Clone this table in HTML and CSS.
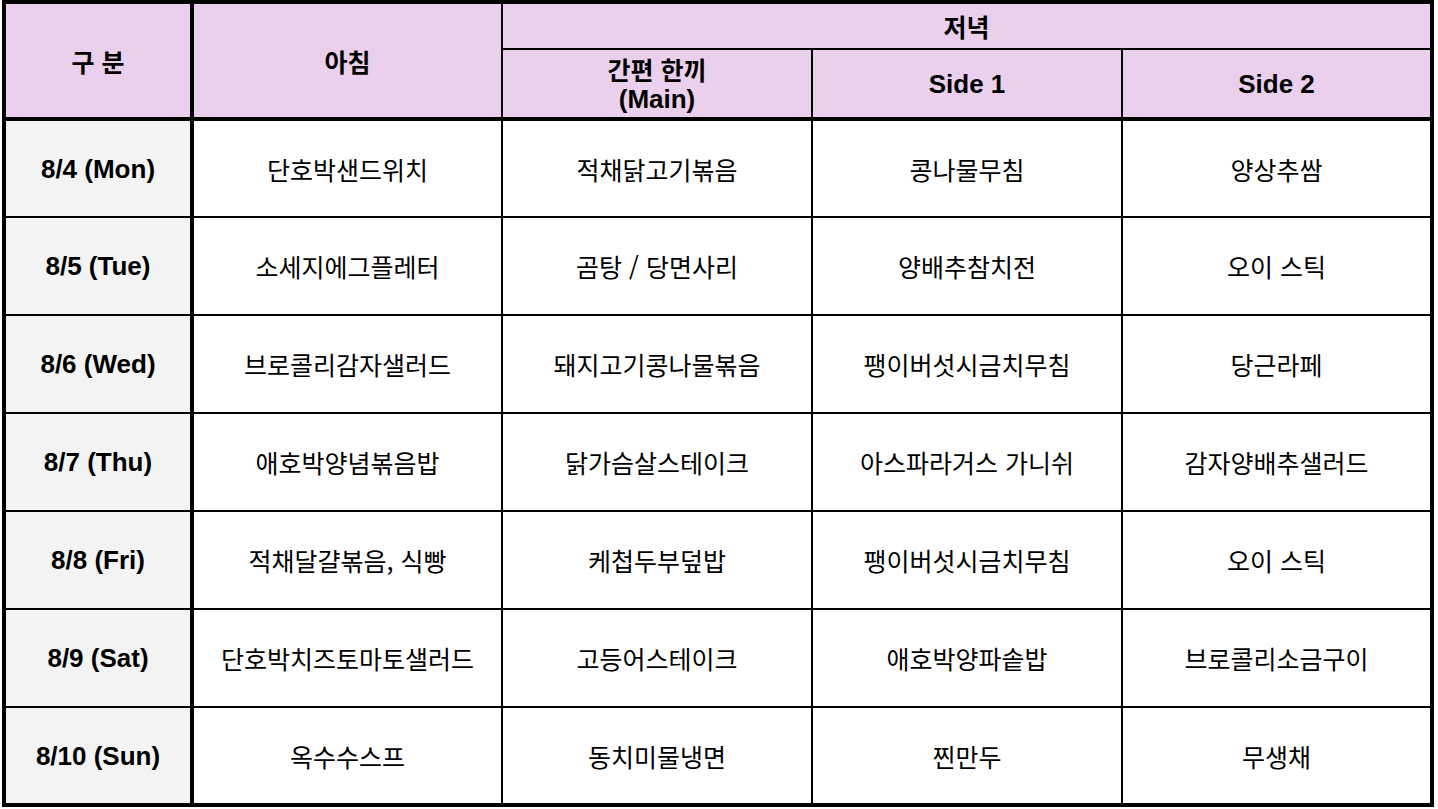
FILE: index.html
```html
<!DOCTYPE html>
<html lang="ko">
<head>
<meta charset="utf-8">
<title>식단표</title>
<link rel="stylesheet" href="styles.css">
</head>
<body>
<table class="menu">
  <colgroup>
    <col class="c-day">
    <col class="c-meal">
    <col class="c-meal">
    <col class="c-meal">
    <col class="c-meal">
  </colgroup>
  <thead>
    <tr class="h1">
      <th rowspan="2" class="ko thick-r">구 분</th>
      <th rowspan="2" class="ko">아침</th>
      <th colspan="3" class="ko">저녁</th>
    </tr>
    <tr class="h2">
      <th class="ko two"><span class="line">간편 한끼</span><span class="line lat">(Main)</span></th>
      <th class="lat">Side 1</th>
      <th class="lat">Side 2</th>
    </tr>
  </thead>
  <tbody>
    <tr><td class="day">8/4 (Mon)</td><td>단호박샌드위치</td><td>적채닭고기볶음</td><td>콩나물무침</td><td>양상추쌈</td></tr>
    <tr><td class="day">8/5 (Tue)</td><td>소세지에그플레터</td><td>곰탕 / 당면사리</td><td>양배추참치전</td><td>오이 스틱</td></tr>
    <tr><td class="day">8/6 (Wed)</td><td>브로콜리감자샐러드</td><td>돼지고기콩나물볶음</td><td>팽이버섯시금치무침</td><td>당근라페</td></tr>
    <tr><td class="day">8/7 (Thu)</td><td>애호박양념볶음밥</td><td>닭가슴살스테이크</td><td>아스파라거스 가니쉬</td><td>감자양배추샐러드</td></tr>
    <tr><td class="day">8/8 (Fri)</td><td>적채달걀볶음, 식빵</td><td>케첩두부덮밥</td><td>팽이버섯시금치무침</td><td>오이 스틱</td></tr>
    <tr><td class="day">8/9 (Sat)</td><td>단호박치즈토마토샐러드</td><td>고등어스테이크</td><td>애호박양파솥밥</td><td>브로콜리소금구이</td></tr>
    <tr><td class="day">8/10 (Sun)</td><td>옥수수스프</td><td>동치미물냉면</td><td>찐만두</td><td>무생채</td></tr>
  </tbody>
</table>
</body>
</html>
```

FILE: styles.css
```css
html, body {
  margin: 0;
  padding: 0;
  background: #ffffff;
}

body {
  padding: 0 0 0 2px;
  font-family: "Noto Sans CJK KR", "Liberation Sans", sans-serif;
  color: #000;
}

.menu {
  border-collapse: collapse;
  table-layout: fixed;
  width: 1432px;
  border: 4px solid #000;
}

.c-day { width: 188px; }
.c-meal { width: 310px; }

.menu th,
.menu td {
  border: 2px solid #000;
  padding: 0;
  text-align: center;
  vertical-align: middle;
  font-size: 25px;
  line-height: 28px;
}

.menu th {
  background: #ead0ec;
  font-weight: bold;
}

.menu .line {
  display: block;
  height: 30px;
  line-height: 30px;
}

.menu .lat {
  font-family: "Liberation Sans", "Noto Sans CJK KR", sans-serif;
  font-size: 26px;
  font-weight: bold;
}

.h1 { height: 47px; }
.h2 { height: 70px; }

.menu thead tr.h2 th,
.menu thead th[rowspan] {
  border-bottom: 4px solid #000;
}

.menu .thick-r,
.menu td.day {
  border-right: 4px solid #000;
}

.menu tbody tr { height: 98px; }

.menu td {
  font-weight: normal;
}

.menu td.day {
  background: #f3f3f3;
  font-family: "Liberation Sans", "Noto Sans CJK KR", sans-serif;
  font-weight: bold;
  font-size: 26px;
}
```
